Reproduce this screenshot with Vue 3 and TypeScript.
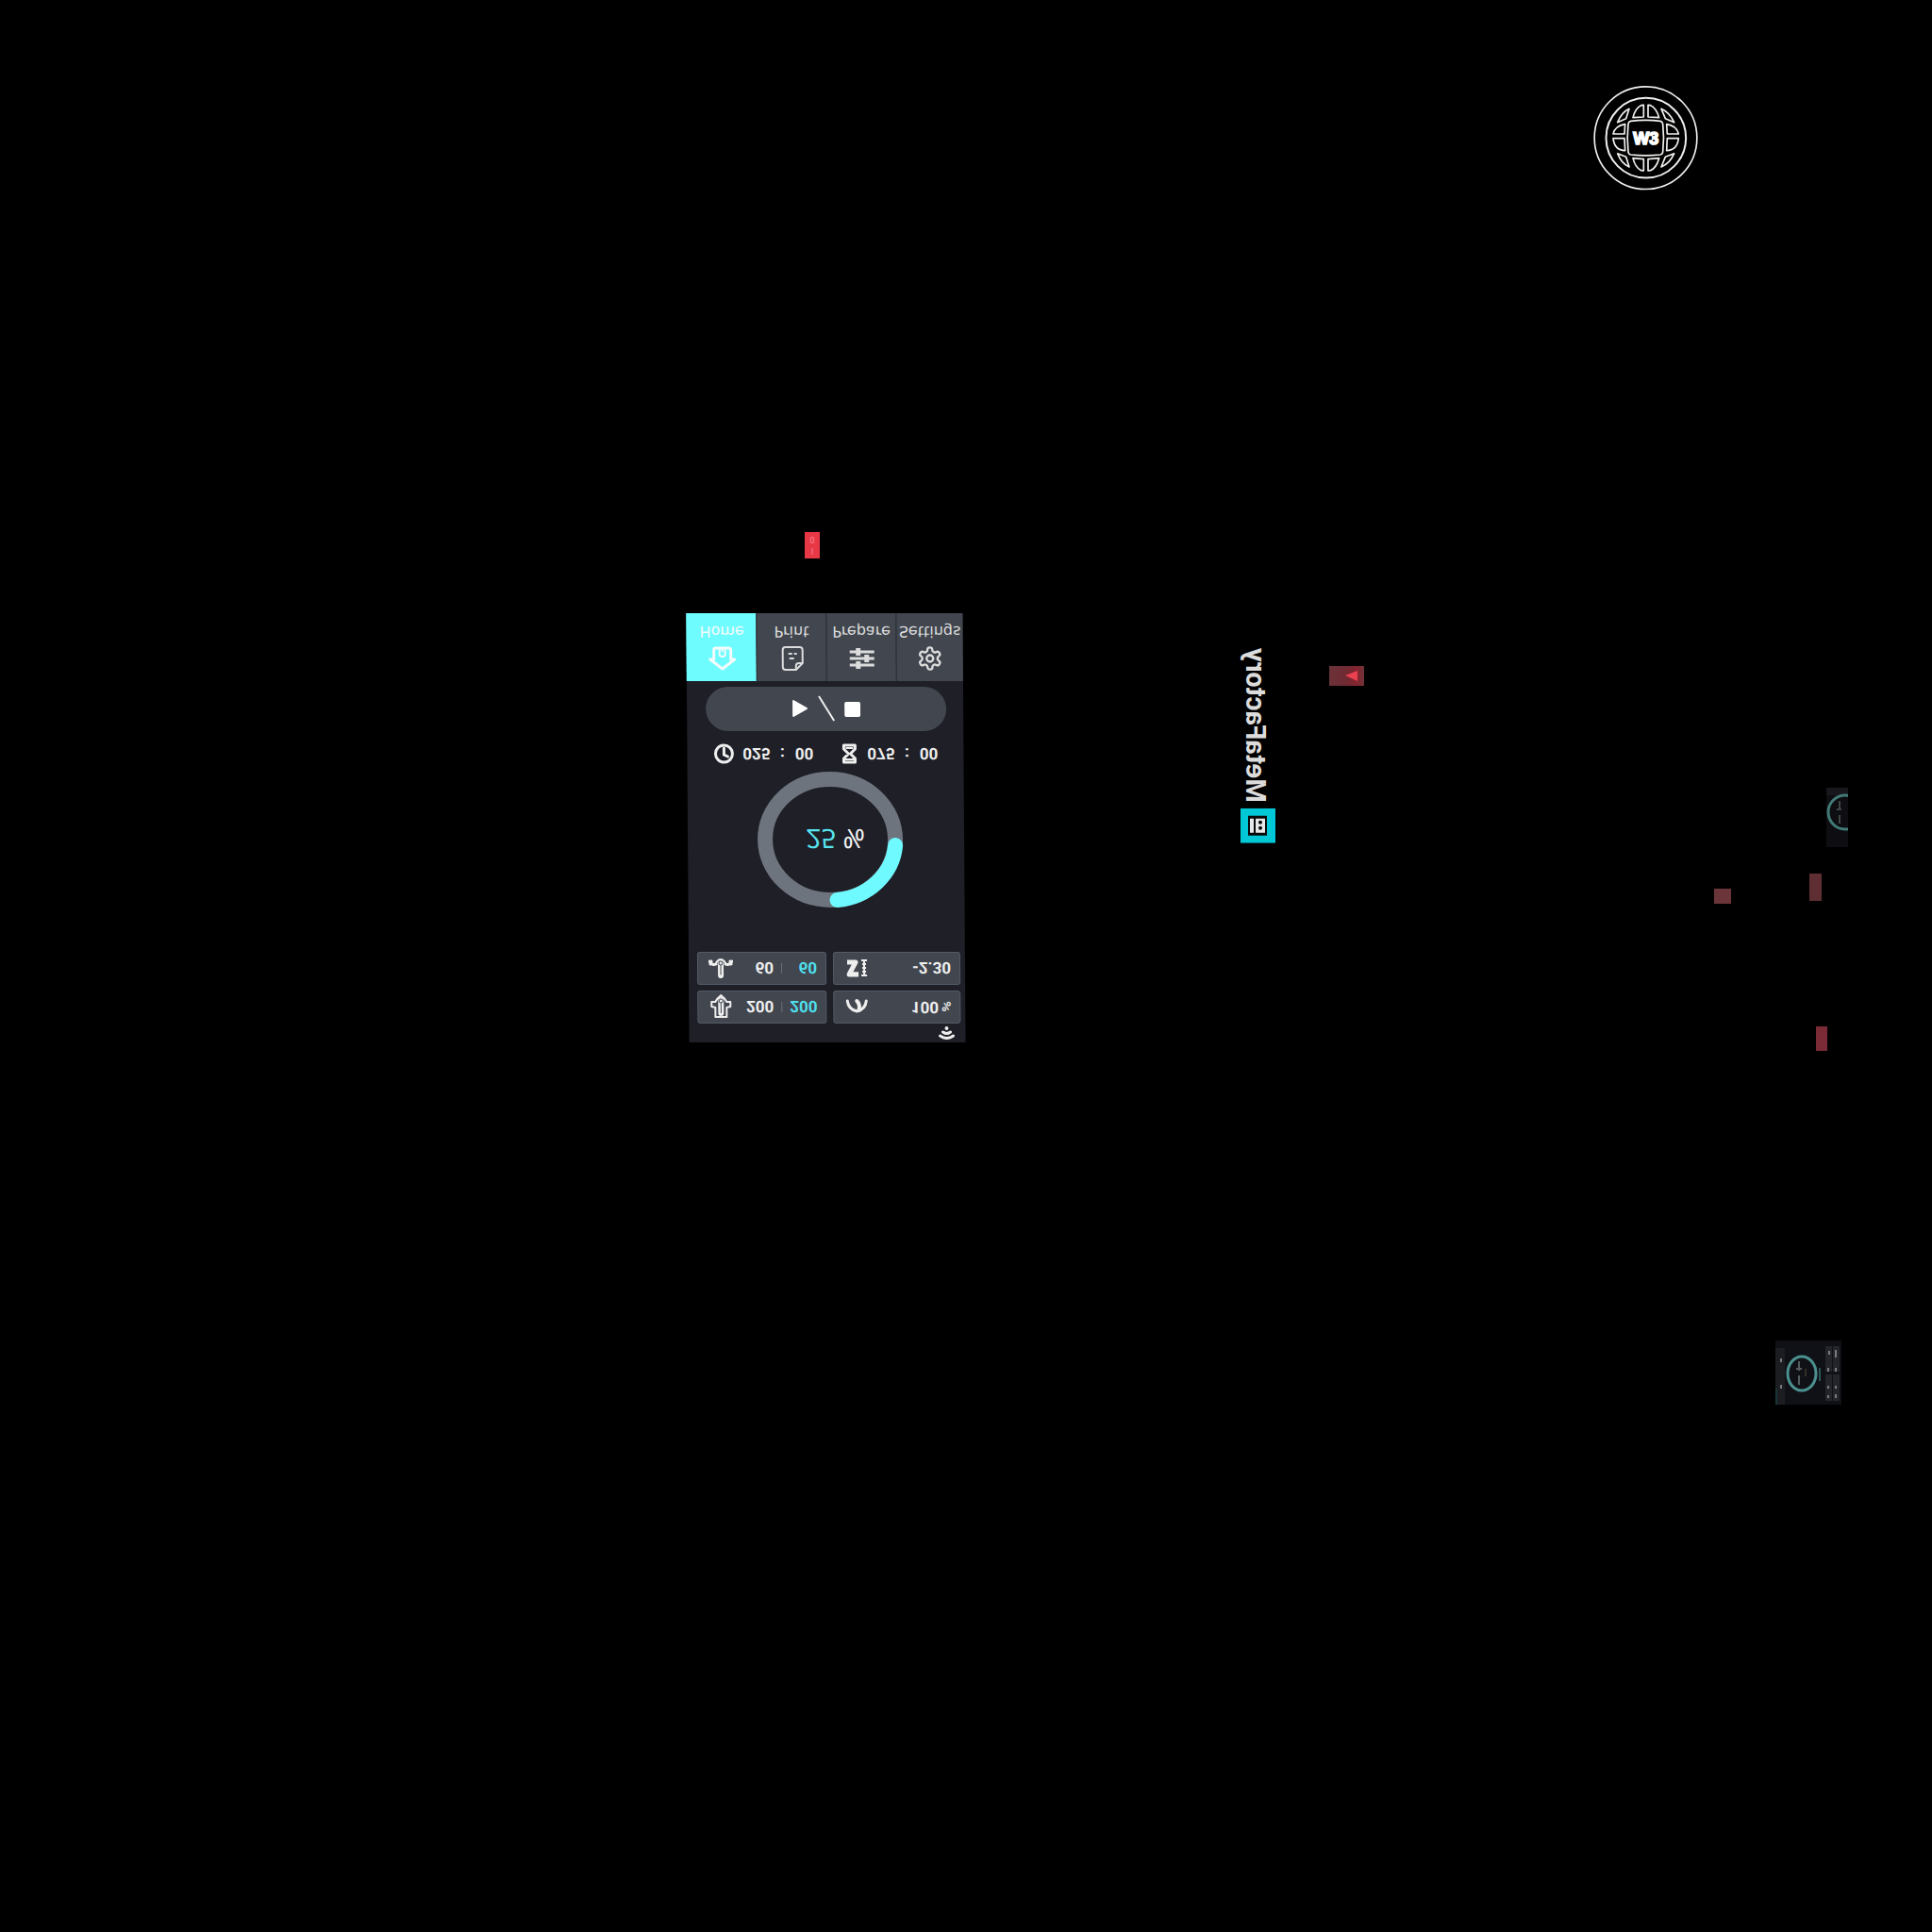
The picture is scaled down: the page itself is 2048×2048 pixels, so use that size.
<script setup lang="ts">
interface Tab { id: string; label: string }
interface Patch { id: string; x: number; y: number; w: number; h: number; color: string }

const tabs: Tab[] = [
  { id: 'home', label: 'Home' },
  { id: 'print', label: 'Print' },
  { id: 'prepare', label: 'Prepare' },
  { id: 'settings', label: 'Settings' },
]

const patches: Patch[] = [
  { id: 'a', x: 1817, y: 942, w: 18, h: 16, color: '#6c353a' },
  { id: 'b', x: 1918, y: 926, w: 13, h: 29, color: '#5f2e32' },
  { id: 'c', x: 1925, y: 1088, w: 12, h: 26, color: '#7a2b35' },
]
</script>

<template>
  <main class="atlas">
    <svg class="piece globe" viewBox="0 0 390 390" role="img" aria-label="W3">
      <g fill="none" stroke="#f0f0ee" stroke-width="5" stroke-linejoin="round">
        <circle cx="193.500" cy="198.500" r="163" />
        <circle cx="194.500" cy="198.500" r="127" stroke-width="6" />
        <path d="M146 145Q193 139 240 145Q247 147 248 154Q253 198 248 243Q247 251 240 252Q193 257 146 252Q139 251 138 243Q133 198 138 154Q139 147 146 145Z" />
        <path d="M187 94V132L153 134Q160 104 179 95Z" />
        <path d="M201 94V132L236 134Q228 104 209 95Z" />
        <path d="M187 303V266L153 263Q160 293 179 302Z" />
        <path d="M201 303V266L236 263Q228 293 209 302Z" />
        <path d="M141 106L131 137L104 149Q117 117 141 106Z" />
        <path d="M243 106L256 137L284 149Q270 118 243 106Z" />
        <path d="M104 248L131 259L141 291Q116 280 104 248Z" />
        <path d="M284 248L256 259L243 291Q271 279 284 248Z" />
        <path d="M128 155L126 186H90Q96 160 128 155Z" />
        <path d="M260 155L262 186H298Q292 160 260 155Z" />
        <path d="M126 200L128 239Q94 238 90 200Z" />
        <path d="M262 200L260 239Q294 238 298 200Z" />
      </g>
      <text x="194" y="219" text-anchor="middle" class="globe-text">W3</text>
    </svg>

    <div class="piece switch"><span>I</span><span>0</span></div>

    <section class="piece panel" aria-label="Printer">
      <header class="status">
        <svg width="18" height="14" viewBox="0 0 18 14" fill="none" stroke="#eee" stroke-width="3" stroke-linecap="round">
          <path d="M2 4Q9 -1 16 4M5 8Q9 5 13 8" /><circle cx="9" cy="12" r="1" stroke-width="2" />
        </svg>
      </header>

      <div class="cards">
        <div class="card">
          <svg class="card-icon" viewBox="0 0 26 26" fill="none" stroke="#eee" stroke-width="3" stroke-linejoin="round">
            <path d="M7 2H19V12L23 13V18H19Q17 22 13 25Q9 22 7 18H3V13L7 12Z" stroke-width="2" />
            <path d="M13 6V20" stroke-width="6" stroke-linecap="round" /><path d="M13 6V17" stroke="#41464f" stroke-width="1" />
            <circle cx="13" cy="19" r="2" stroke="#41464f" stroke-width="1" fill="#eee" />
          </svg>
          <b class="now">200</b><i class="bar"></i><b class="goal">200</b>
        </div>
        <div class="card">
          <svg class="card-icon" viewBox="0 0 26 26" fill="none" stroke="#eee" stroke-width="3" stroke-linecap="round">
            <path d="M3 19Q4 10 13 8Q22 10 23 19" /><path d="M13 19Q17 15 15 9" stroke-width="4" />
          </svg>
          <b class="single">100<small>%</small></b>
        </div>
        <div class="card">
          <svg class="card-icon" viewBox="0 0 26 26" fill="none" stroke="#eee" stroke-width="4" stroke-linecap="round" stroke-linejoin="round">
            <path d="M1 20Q4 15 8 17M18 17Q22 15 25 20M2 17L3 20M24 17L23 20" stroke-width="3" />
            <path d="M8 18Q10 22 13 22Q16 22 18 18" stroke-width="2" /><path d="M13 5V18" stroke-width="6" /><path d="M13 6V17" stroke="#41464f" stroke-width="1" />
            <circle cx="13" cy="18" r="2" stroke="#41464f" stroke-width="1" fill="#eee" />
          </svg>
          <b class="now">60</b><i class="bar"></i><b class="goal">60</b>
        </div>
        <div class="card">
          <svg class="card-icon" viewBox="0 0 26 26" fill="none" stroke="#eee" stroke-width="5" stroke-linejoin="round">
            <path d="M15 6H5L12 19H3" /><path d="M15 7H5L13 19" stroke-width="3" /><path d="M21 4V22M18 5H24M18 21H24" stroke-width="2" /><path d="M19 9H23M19 13H23M19 17H23" stroke-width="2" />
          </svg>
          <b class="single">-2.30</b>
        </div>
      </div>

      <div class="gauge">
        <svg width="156" height="144" viewBox="0 0 156 144" fill="none" stroke-width="16" stroke-linecap="round">
          <ellipse cx="78" cy="72" rx="69" ry="64" stroke="#6e747e" />
          <path d="M85 8A69 64 0 0 1 147 66" stroke="#6ffaff" />
        </svg>
        <p class="percent"><span>25</span> %</p>
      </div>

      <div class="times">
        <div class="time">
          <svg width="22" height="22" viewBox="0 0 22 22" fill="none" stroke="#eee" stroke-width="3">
            <circle cx="11" cy="11" r="9" /><path d="M11 17V10L15 8" stroke-linecap="round" />
          </svg>
          <b>025</b><b>:</b><b>00</b>
        </div>
        <div class="time">
          <svg width="20" height="22" viewBox="0 0 20 22" fill="none" stroke="#eee" stroke-width="3" stroke-linejoin="round">
            <path d="M4 2H16V6L11 11L16 16V20H4V16L9 11L4 6Z" /><path d="M4 5H16M6 17H14" stroke-width="2" />
          </svg>
          <b>075</b><b>:</b><b>00</b>
        </div>
      </div>

      <div class="controls">
        <button type="button" aria-label="Play">
          <svg width="18" height="20" viewBox="0 0 18 20"><path d="M2 2L16 10L2 18Z" fill="#fff" stroke="#fff" stroke-width="2" stroke-linejoin="round" /></svg>
        </button>
        <svg width="18" height="28" viewBox="0 0 18 28"><path d="M1 27L17 1" stroke="#eee" stroke-width="2" /></svg>
        <button type="button" aria-label="Stop">
          <svg width="17" height="17" viewBox="0 0 17 17"><rect width="17" height="16" rx="2" fill="#fff" /></svg>
        </button>
      </div>

      <nav class="tabs">
        <button v-for="tab in tabs" :key="tab.id" type="button" class="tab" :class="{ active: tab.id === 'home' }">
          <svg v-if="tab.id === 'home'" width="30" height="28" viewBox="0 0 30 28" fill="none" stroke="currentColor" stroke-width="3" stroke-linejoin="round">
            <path d="M15 3L28 13H24V23Q24 25 22 25H8Q6 25 6 23V13H2Z" /><path d="M12 25V18Q12 16 15 16Q18 16 18 18V25M15 21V25" stroke-width="2" />
          </svg>
          <svg v-else-if="tab.id === 'print'" width="30" height="28" viewBox="0 0 30 28" fill="none" stroke="currentColor" stroke-width="2" stroke-linejoin="round">
            <path d="M8 2H19L26 9V23Q26 26 23 26H8Q5 26 5 23V5Q5 2 8 2Z" /><path d="M19 2V6Q19 9 22 9H26M12 14H17M11 19H15M17 19H20" />
          </svg>
          <svg v-else-if="tab.id === 'prepare'" width="30" height="28" viewBox="0 0 30 28" fill="none" stroke="currentColor" stroke-width="3">
            <path d="M2 7H28M2 14H28M2 21H28" /><path d="M11 3V11M20 10V18M11 17V25" stroke-width="5" />
          </svg>
          <svg v-else width="30" height="30" viewBox="0 0 24 24" fill="none" stroke="currentColor" stroke-width="2">
            <path d="M12.220 2h-.44a2 2 0 0 0-2 2v.18a2 2 0 0 1-1 1.730l-.43.25a2 2 0 0 1-2 0l-.15-.08a2 2 0 0 0-2.730.730l-.22.38a2 2 0 0 0 .73 2.730l.15.1a2 2 0 0 1 1 1.720v.51a2 2 0 0 1-1 1.740l-.15.09a2 2 0 0 0-.73 2.730l.22.38a2 2 0 0 0 2.730.73l.15-.08a2 2 0 0 1 2 0l.43.25a2 2 0 0 1 1 1.730V20a2 2 0 0 0 2 2h.44a2 2 0 0 0 2-2v-.18a2 2 0 0 1 1-1.730l.43-.25a2 2 0 0 1 2 0l.15.08a2 2 0 0 0 2.730-.73l.22-.39a2 2 0 0 0-.73-2.730l-.15-.08a2 2 0 0 1-1-1.740v-.5a2 2 0 0 1 1-1.740l.15-.09a2 2 0 0 0 .73-2.730l-.22-.38a2 2 0 0 0-2.730-.73l-.15.08a2 2 0 0 1-2 0l-.43-.25a2 2 0 0 1-1-1.730V4a2 2 0 0 0-2-2z" /><circle cx="12" cy="12" r="3" />
          </svg>
          <span>{{ tab.label }}</span>
        </button>
      </nav>
    </section>

    <div class="piece brand">
      <svg width="37" height="37" viewBox="0 0 37 37">
        <rect width="37" height="37" fill="#00c8d7" /><rect x="8" y="8" width="20" height="21" fill="#0a0a0c" />
        <path d="M10 11H14V26H10ZM16 11H26V26H16Z" fill="#e8e8e8" />
        <circle cx="21" cy="16" r="2" fill="#0a0a0c" /><circle cx="21" cy="22" r="2" fill="#0a0a0c" />
      </svg>
      <span>MetaFactory</span>
    </div>

    <svg class="piece arrow" width="37" height="21" viewBox="0 0 37 21">
      <defs>
        <linearGradient id="plate"><stop offset="0" stop-color="#6a3238" /><stop offset="0.500" stop-color="#702a32" /><stop offset="0.800" stop-color="#84242f" /><stop offset="1" stop-color="#70343a" /></linearGradient>
      </defs>
      <rect width="37" height="21" fill="url(#plate)" /><path d="M17 10L30 5V16Z" fill="#ea4050" />
    </svg>

    <i v-for="p in patches" :key="p.id" class="piece" :style="{ left: p.x + 'px', top: p.y + 'px', width: p.w + 'px', height: p.h + 'px', background: p.color }"></i>

    <svg class="piece thumb-slice" width="23" height="63" viewBox="0 0 23 63">
      <rect width="23" height="63" fill="#0d0d12" /><rect width="23" height="8" fill="#17171c" />
      <ellipse cx="20" cy="26" rx="18" ry="18" fill="none" stroke="#427a76" stroke-width="3" />
      <path d="M14 14V24M14 29V38M11 23H16" stroke="#55605c" stroke-width="2" opacity="0.700" />
    </svg>

    <svg class="piece thumb" width="70" height="68" viewBox="0 0 70 68">
      <rect width="70" height="68" fill="#101116" /><rect y="8" width="10" height="60" fill="#1b1d21" /><rect y="50" width="2" height="18" fill="#173538" />
      <rect x="53" y="6" width="7" height="27" fill="#24252b" /><rect x="61" y="6" width="7" height="27" fill="#24252b" />
      <rect x="53" y="36" width="7" height="28" fill="#24252b" /><rect x="61" y="36" width="7" height="28" fill="#24252b" />
      <ellipse cx="28" cy="35" rx="15" ry="18" fill="none" stroke="#4a918f" stroke-width="3" />
      <path d="M25 22V32M25 37V47M22 30H28" stroke="#555d5e" stroke-width="2" /><path d="M32 30V38" stroke="#5b4b35" /><path d="M47 29V43" stroke="#2c5557" stroke-width="2" />
      <path d="M6 19V23M6 47V51M56 29V33M64 29V33M56 48V51M64 48V51M56 58V61M64 57V61M57 11V15M64 10V18" stroke="#777b82" stroke-width="2" />
    </svg>
  </main>
</template>

<style>
body { margin: 0; background: #000; }
</style>

<style scoped>
.atlas { position: relative; width: 100%; min-height: 100vh; background: #000; overflow: hidden; font-family: Roboto, "Liberation Sans", sans-serif; }
.piece { position: absolute; display: block; }
.globe { left: 1680px; top: 80px; width: 130px; height: 130px; }
.globe-text { font: bold 54px "Liberation Sans", sans-serif; fill: #fff; stroke: #fff; stroke-width: 5px; }
.switch { left: 853px; top: 564px; width: 16px; height: 28px; background: #e83846; color: #f78b96; font-size: 9px; line-height: 12px; transform: scaleY(-1); display: flex; flex-direction: column; align-items: center; justify-content: center; }
.arrow { left: 1409px; top: 706px; }
.thumb-slice { left: 1936px; top: 835px; }
.thumb { left: 1882px; top: 1421px; }

.brand { left: 1315px; top: 687px; transform: scaleY(-1); writing-mode: vertical-rl; display: flex; align-items: flex-end; gap: 6px; color: #dcdcdc; font-size: 29px; font-weight: 700; line-height: 32px; }
.brand svg { flex: none; }

.panel { left: 729px; top: 650px; width: 293px; background: #1e1f27; transform: scaleY(-1) skewX(-0.4deg); color: #eee; }
.status { height: 20px; display: flex; align-items: center; justify-content: flex-end; padding-right: 11px; }
.cards { display: grid; grid-template-columns: 137px 1fr; gap: 6px 7px; padding: 0 5px 0 9px; }
.card { box-sizing: border-box; height: 35px; display: flex; align-items: center; padding: 0 9px 0 11px; background: #41464f; border: 1px solid #555b65; border-radius: 3px; font-size: 17px; line-height: 20px; }
.card b { font-weight: 700; }
.card-icon { flex: none; width: 26px; height: 26px; }
.now { flex: 1; text-align: right; }
.bar { width: 1px; height: 11px; margin: 0 8px; background: #6a707a; }
.goal { width: 29px; text-align: right; color: #4fdfea; }
.single { flex: 1; text-align: right; }
.single small { margin-left: 3px; font-size: 14px; }

.gauge { display: grid; place-items: center; padding: 47px 0 0 8px; }
.gauge > * { grid-area: 1 / 1; }
.gauge svg { display: block; }
.percent { margin: 0; font: 28px/36px "Noto Sans", sans-serif; padding-left: 12px; color: #f4f4f4; }
.percent span { color: #58e4ee; }

.times { display: flex; gap: 28px; padding: 6px 0 11px 28px; }
.time { display: grid; grid-template-columns: auto 38px 26px 20px; align-items: center; height: 26px; font-size: 17px; }
.time b { font-weight: 700; text-align: center; line-height: 20px; }
.time b:nth-child(2) { text-align: right; }

.controls { display: flex; align-items: center; justify-content: center; gap: 10px; height: 47px; margin: 0 18px 6px 20px; border-radius: 24px; background: #41464f; }
button { appearance: none; border: 0; margin: 0; padding: 0; background: none; color: inherit; }
.controls button, .controls svg { display: block; }

.tabs { display: grid; grid-template-columns: 74px 74px 74px 1fr; height: 72px; }
.tab { display: flex; flex-direction: column; align-items: center; justify-content: space-between; padding: 10px 0 9px; background: #41464f; border-left: 1px solid #2c3038; color: #dcdcdc; font: 16px/20px "DejaVu Sans", sans-serif; }
.tab svg { height: 28px; flex: none; display: block; }
.tab.active { background: #6ffcff; border-left-color: #6ffcff; color: #f4fbfb; }
</style>
